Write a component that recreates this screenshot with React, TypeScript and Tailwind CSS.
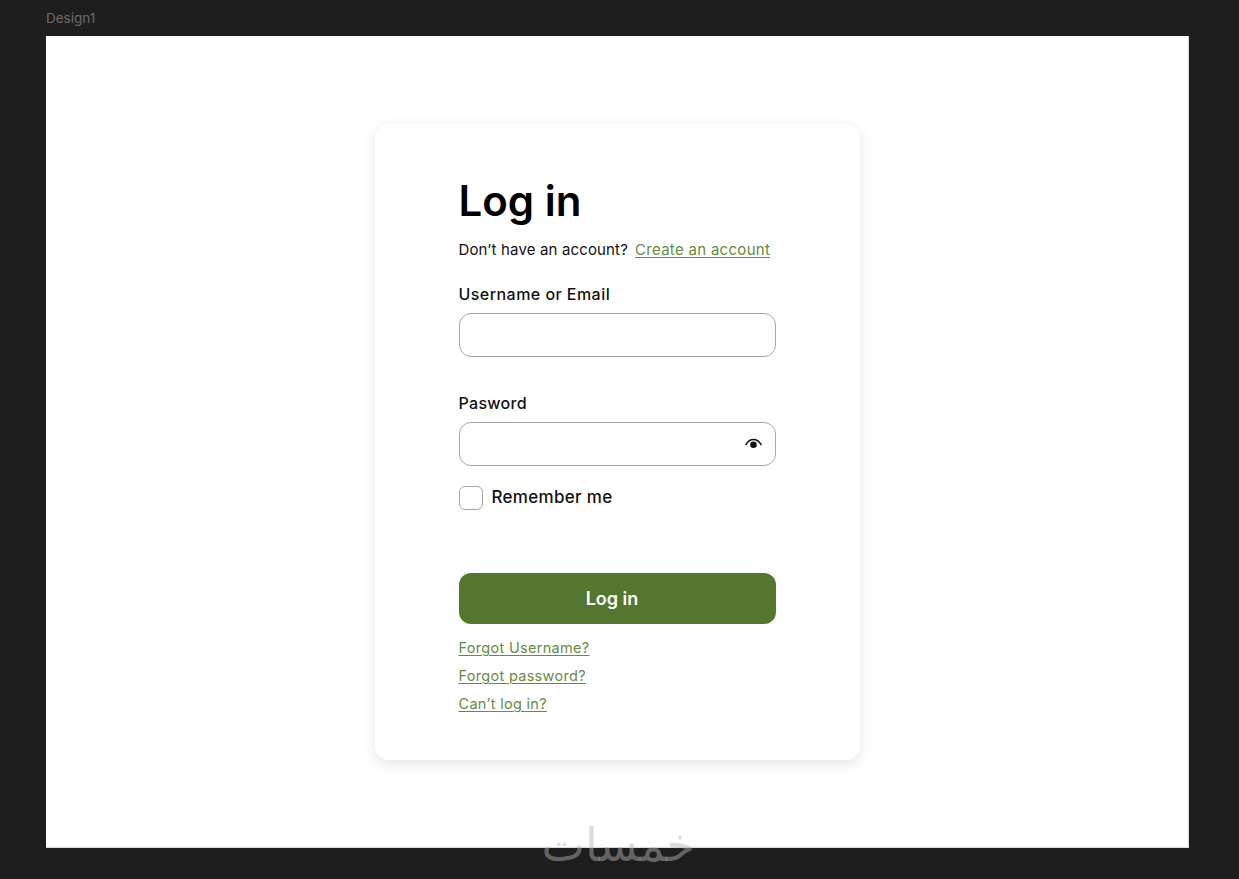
export default function App() {
  const link = "text-[14.5px] leading-[28px] text-[#688a42] underline underline-offset-2 decoration-1 tracking-[0.3px]";
  return (
    <div className="relative h-[879px] overflow-hidden bg-[#1e1e1e] font-['Inter','Liberation_Sans',sans-serif]">
      <div className="h-[36px] pl-[46px] pt-[10px] text-[13.5px] leading-[17px] text-[#6b6b6b]">Design1</div>
      <div className="mx-[46px] mr-[50px] flex h-[812px] justify-center border-b border-r border-[#d8d8d8] bg-white pt-[88px]">
        <div className="h-[636px] w-[485px] rounded-[14px] bg-white pl-[84px] pt-[52px] shadow-[0_4px_14px_rgba(0,0,0,0.11)]">
          <h1 className="text-[42px] font-semibold leading-[50px] text-black">Log in</h1>
          <div className="mt-[12px] flex h-[24px] items-center gap-[7px] text-[15px] leading-[24px]">
            <span className="tracking-[0.15px] text-[#111]">Don’t have an account?</span>
            <a className="text-[#688a42] underline underline-offset-2 decoration-1 tracking-[0.3px]">Create an account</a>
          </div>
          <label className="mt-[20px] block text-[16px] font-medium leading-[24px] tracking-[0.45px] text-[#111]">Username or Email</label>
          <div className="mt-[7px] h-[44px] w-[317px] rounded-[12px] border border-[#a8a8a0]" />
          <label className="mt-[34px] block text-[16px] font-medium leading-[24px] tracking-[0.3px] text-[#111]">Pasword</label>
          <div className="mt-[7px] flex h-[44px] w-[317px] items-center justify-end rounded-[12px] border border-[#a8a8a0] pr-[13px]">
            <svg width="17" height="12" viewBox="0 0 17 12" fill="none">
              <path d="M1 6.5C3 3.2 5.6 1.6 8.5 1.6S14 3.2 16 6.5" stroke="#111" strokeWidth="1.5" strokeLinecap="round" />
              <circle cx="8.5" cy="6.8" r="3.3" fill="#111" />
            </svg>
          </div>
          <div className="mt-[20px] flex h-[24px] items-center gap-[9px]">
            <div className="h-[24px] w-[24px] rounded-[6px] border border-[#a8a8a0]" />
            <span className="-mt-[2px] text-[17px] font-medium leading-[24px] tracking-[0.3px] text-[#111]">Remember me</span>
          </div>
          <button className="mt-[63px] flex h-[51px] w-[317px] items-center justify-center rounded-[12px] bg-[#53772e] pr-[10px] text-[18px] font-semibold text-white">Log in</button>
          <div className="mt-[10px] flex flex-col items-start">
            <a className={link}>Forgot Username?</a>
            <a className={link}>Forgot password?</a>
            <a className={link}>Can’t log in?</a>
          </div>
        </div>
      </div>
      <div dir="rtl" lang="ar" className="absolute left-[545px] top-[820px] w-[150px] whitespace-nowrap text-center font-['DejaVu_Sans',sans-serif] text-[46px] leading-[50px] text-[rgba(180,180,180,0.47)]">خمسات</div>
    </div>
  );
}
